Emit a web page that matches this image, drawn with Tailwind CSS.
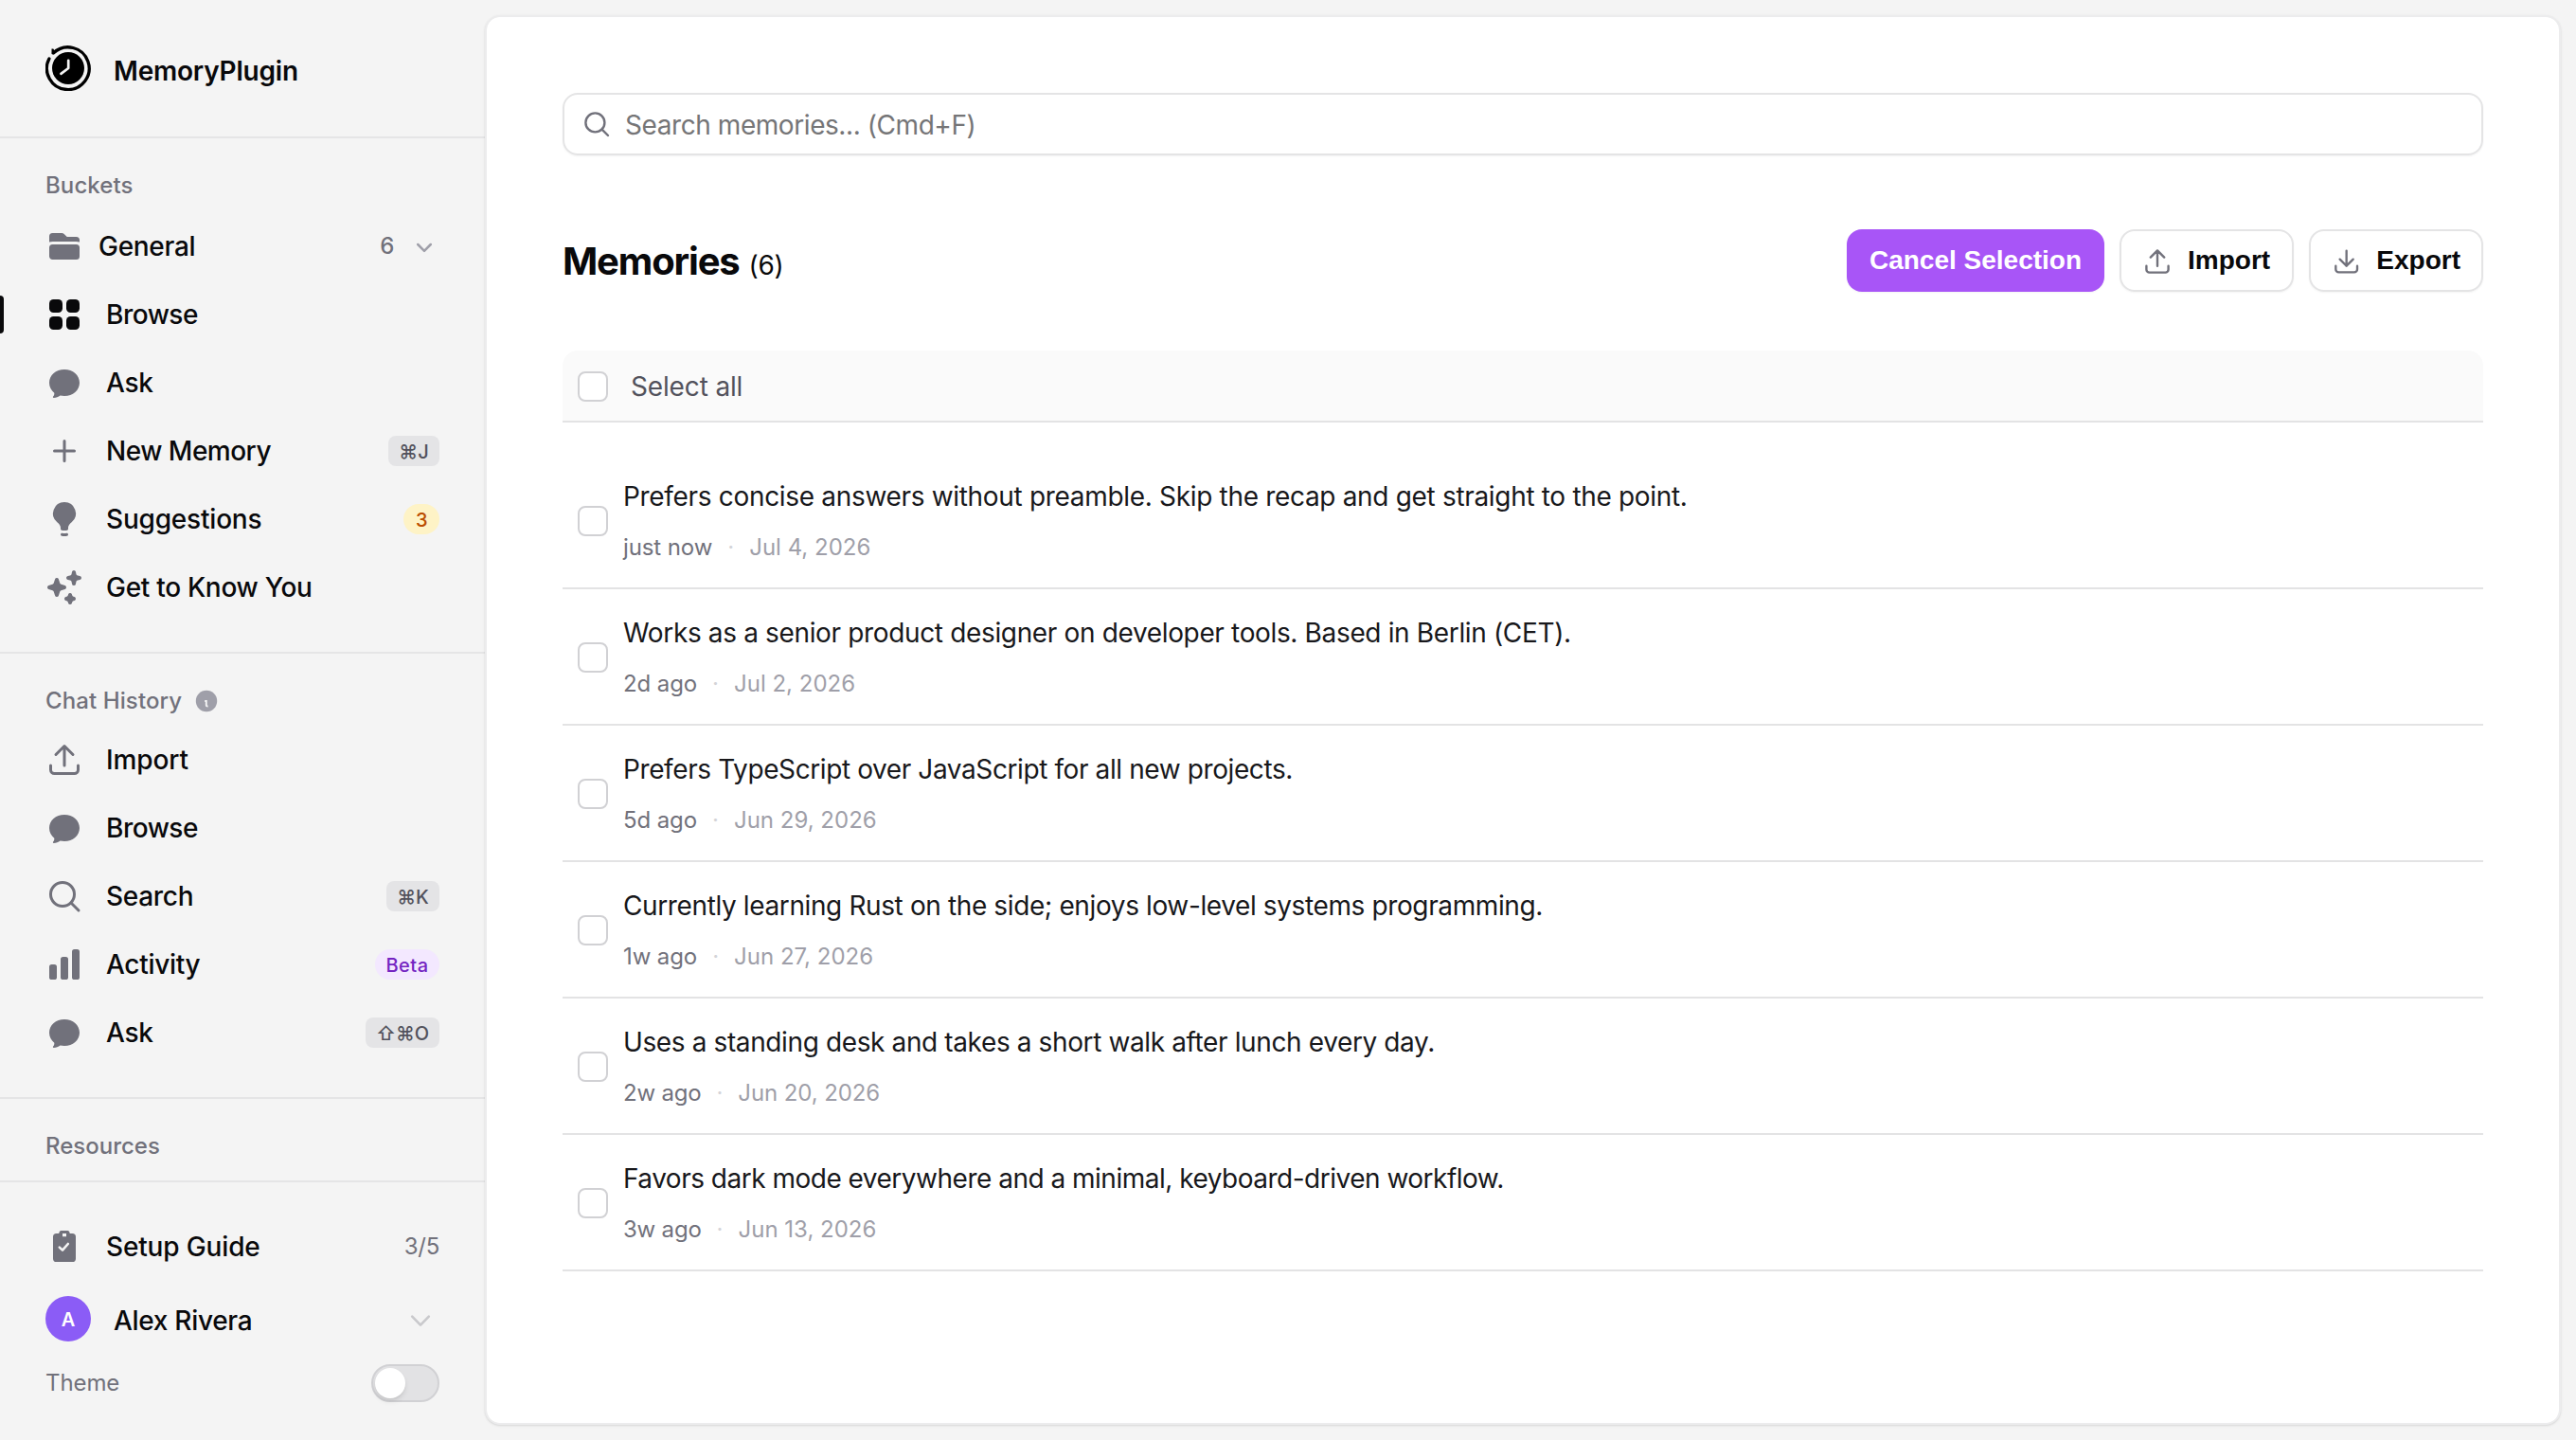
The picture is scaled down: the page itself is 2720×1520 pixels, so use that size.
<!DOCTYPE html>
<html lang="en">
<head>
    <meta charset="utf-8">
    <title>MemoryPlugin</title>
    <script src="https://cdn.jsdelivr.net/npm/@tailwindcss/browser@4"></script>
</head>
<body class="bg-[#f4f4f4] font-['Inter',sans-serif] text-zinc-950 w-[2720px] h-[1520px] overflow-hidden flex">
    <!-- Icons used more than once -->
    <svg class="hidden">
        <symbol id="icon-chat" viewBox="0 0 20 20">
            <path fill="currentColor" d="M10 3c4.5 0 8 3.05 8 7s-3.5 7-8 7c-.75 0-1.5-.09-2.2-.25-1 .8-2.2 1.2-3.45 1.2-.35 0-.5-.4-.3-.68.5-.65.7-1.2.6-1.95C3.05 14.1 2 12.2 2 10c0-3.95 3.5-7 8-7Z"/>
        </symbol>
        <symbol id="icon-upload" viewBox="0 0 20 20">
            <path fill="none" stroke="currentColor" stroke-width="1.5" stroke-linecap="round" stroke-linejoin="round" d="M2.75 13v2.25a2 2 0 0 0 2 2h10.5a2 2 0 0 0 2-2V13M10 13V3M5.5 7.25 10 2.75l4.5 4.5"/>
        </symbol>
        <symbol id="icon-search" viewBox="0 0 20 20">
            <path fill="none" stroke="currentColor" stroke-width="1.5" stroke-linecap="round" d="M15.25 9a6.25 6.25 0 1 1-12.5 0 6.25 6.25 0 0 1 12.5 0ZM13.5 13.5l4 4"/>
        </symbol>
    </svg>

    <!-- Sidebar -->
    <aside class="w-[512px] shrink-0 flex flex-col text-[28px] leading-[40px] font-medium tracking-[-0.3px]">
        <div class="h-[146px] border-b-2 border-[#e5e5e6] px-12 pt-12">
            <div class="flex gap-6">
                <svg class="size-12" viewBox="0 0 48 48" fill="none">
                    <circle cx="24" cy="24" r="17" fill="#000"/>
                    <path stroke="#000" stroke-width="3.3" stroke-linecap="round" d="M3.9 14A22.35 22.35 0 1 0 8.6 7.8"/>
                    <path fill="#000" d="M6.5 3.6h1.8l1.4 2.2 1.6 1.5-3.2 2.2-1.6-.4Z"/>
                    <path stroke="#f4f4f4" stroke-width="2.7" stroke-linecap="round" stroke-linejoin="round" d="M24.2 15.8V24l-7.8 5.8"/>
                </svg>
                <span class="font-semibold tracking-[-0.2px] pt-[7px]">MemoryPlugin</span>
            </div>
        </div>

        <div class="h-[544px] border-b-2 border-[#e5e5e6]">
            <h3 class="h-[78px] pt-[34px] px-12 text-2xl leading-8 text-zinc-500 tracking-[0.1px]">Buckets</h3>
            <div class="h-[72px] px-12 flex items-center gap-4">
                <svg class="size-10 text-zinc-500" viewBox="0 0 20 20" fill="currentColor"><path d="M3.75 3A1.75 1.75 0 0 0 2 4.75v2.95q.8-.2 1.75-.2h12.5q.95 0 1.75.2V6.75A1.75 1.75 0 0 0 16.25 5h-4.836a.25.25 0 0 1-.177-.073L9.823 3.513A1.75 1.75 0 0 0 8.586 3H3.75ZM3.75 9A1.75 1.75 0 0 0 2 10.75v4.5c0 .966.784 1.75 1.75 1.75h12.5A1.75 1.75 0 0 0 18 15.25v-4.5A1.75 1.75 0 0 0 16.25 9H3.75Z"/></svg>
                <span class="flex-1">General</span>
                <span class="text-2xl text-zinc-500">6</span>
                <svg class="w-8 h-8" viewBox="0 0 32 32" fill="none"><path class="stroke-zinc-400" stroke-width="2.5" stroke-linecap="round" stroke-linejoin="round" d="m9.2 14 6.8 6.8 6.8-6.8"/></svg>
            </div>
            <div class="h-[72px] px-12 flex items-center gap-6 relative">
                <span class="absolute left-0 top-4 w-1 h-10 bg-zinc-950 rounded-r-sm"></span>
                <svg class="size-10" viewBox="0 0 20 20" fill="currentColor"><rect x="2" y="2" width="7" height="7" rx="2.25"/><rect x="11" y="2" width="7" height="7" rx="2.25"/><rect x="2" y="11" width="7" height="7" rx="2.25"/><rect x="11" y="11" width="7" height="7" rx="2.25"/></svg>
                <span class="tracking-[-0.5px]">Browse</span>
            </div>
            <div class="h-[72px] px-12 flex items-center gap-6">
                <svg class="size-10 text-zinc-500"><use href="#icon-chat"/></svg>
                <span>Ask</span>
            </div>
            <div class="h-[72px] px-12 flex items-center gap-6">
                <svg class="size-10 text-zinc-500" viewBox="0 0 20 20" fill="none" stroke="currentColor" stroke-width="1.5" stroke-linecap="round"><path d="M10 4.75v10.5M4.75 10h10.5"/></svg>
                <span class="flex-1 tracking-[-0.5px]">New Memory</span>
                <kbd class="h-8 w-[54px] flex items-center justify-center rounded-lg bg-[#e4e4e6] pt-px text-xl text-zinc-600 font-[Inter] tracking-normal">⌘J</kbd>
            </div>
            <div class="h-[72px] px-12 flex items-center gap-6">
                <svg class="size-10 text-zinc-500" viewBox="0 0 20 20" fill="currentColor"><path d="M10 1a6 6 0 0 0-3.815 10.631C7.237 12.5 8 13.443 8 14.456v.644a.75.75 0 0 0 .572.729 6.016 6.016 0 0 0 2.856 0A.75.75 0 0 0 12 15.1v-.644c0-1.013.762-1.957 1.815-2.825A6 6 0 0 0 10 1ZM8.863 17.414a.75.75 0 0 0-.226 1.483 9.066 9.066 0 0 0 2.726 0 .75.75 0 0 0-.226-1.483 7.553 7.553 0 0 1-2.274 0Z"/></svg>
                <span class="flex-1 tracking-[-0.2px]">Suggestions</span>
                <span class="h-8 w-[38px] flex items-center justify-center rounded-full bg-amber-100 pt-[2px] text-xl text-amber-700">3</span>
            </div>
            <div class="h-[72px] px-12 flex items-center gap-6">
                <svg class="size-10 text-zinc-500" viewBox="0 0 20 20" fill="currentColor"><path d="M15.98 1.804a1 1 0 0 0-1.96 0l-.24 1.192a1 1 0 0 1-.784.785l-1.192.238a1 1 0 0 0 0 1.962l1.192.238a1 1 0 0 1 .785.785l.238 1.192a1 1 0 0 0 1.962 0l.238-1.192a1 1 0 0 1 .785-.785l1.192-.238a1 1 0 0 0 0-1.962l-1.192-.238a1 1 0 0 1-.785-.785l-.238-1.192ZM6.949 5.684a1 1 0 0 0-1.898 0l-.683 2.051a1 1 0 0 1-.633.633l-2.051.683a1 1 0 0 0 0 1.898l2.051.684a1 1 0 0 1 .633.632l.683 2.051a1 1 0 0 0 1.898 0l.683-2.051a1 1 0 0 1 .633-.633l2.051-.683a1 1 0 0 0 0-1.898l-2.051-.683a1 1 0 0 1-.633-.633L6.95 5.684ZM13.949 13.684a1 1 0 0 0-1.898 0l-.184.551a1 1 0 0 1-.632.633l-.551.183a1 1 0 0 0 0 1.898l.551.183a1 1 0 0 1 .633.633l.183.551a1 1 0 0 0 1.898 0l.184-.551a1 1 0 0 1 .632-.633l.551-.183a1 1 0 0 0 0-1.898l-.551-.184a1 1 0 0 1-.633-.632l-.183-.551Z"/></svg>
                <span>Get to Know You</span>
            </div>
        </div>

        <div class="h-[470px] border-b-2 border-[#e5e5e6]">
            <h3 class="h-[76px] pt-[34px] px-12 flex gap-[14px] text-2xl leading-8 text-zinc-500 tracking-[0.1px]">
                Chat History
                <svg class="size-6 mt-1" viewBox="0 0 24 24"><circle cx="12" cy="12" r="11.2" class="fill-zinc-400"/><path fill="none" stroke="#f4f4f4" stroke-width="1.9" d="M10.2 12h1.6v4.4q0 1.2 1.8 1"/></svg>
            </h3>
            <div class="h-[72px] px-12 flex items-center gap-6">
                <svg class="size-10 text-zinc-500"><use href="#icon-upload"/></svg>
                <span class="tracking-[-0.1px]">Import</span>
            </div>
            <div class="h-[72px] px-12 flex items-center gap-6">
                <svg class="size-10 text-zinc-500"><use href="#icon-chat"/></svg>
                <span class="tracking-[-0.5px]">Browse</span>
            </div>
            <div class="h-[72px] px-12 flex items-center gap-6">
                <svg class="size-10 text-zinc-500"><use href="#icon-search"/></svg>
                <span class="flex-1">Search</span>
                <kbd class="h-8 w-14 flex items-center justify-center rounded-lg bg-[#e4e4e6] pt-px text-xl text-zinc-600 font-[Inter] tracking-normal">⌘K</kbd>
            </div>
            <div class="h-[72px] px-12 flex items-center gap-6">
                <svg class="size-10 text-zinc-500" viewBox="0 0 20 20" fill="currentColor"><rect x="2" y="10" width="4" height="8" rx="1.3"/><rect x="8" y="6" width="4" height="12" rx="1.3"/><rect x="14" y="2" width="4" height="16" rx="1.3"/></svg>
                <span class="flex-1">Activity</span>
                <span class="h-8 w-[68px] flex items-center justify-center rounded-full bg-purple-100 pt-[2px] text-xl text-[#7424c2] tracking-[0.5px]">Beta</span>
            </div>
            <div class="h-[72px] px-12 flex items-center gap-6">
                <svg class="size-10 text-zinc-500"><use href="#icon-chat"/></svg>
                <span class="flex-1">Ask</span>
                <kbd class="h-8 w-[78px] flex items-center justify-center rounded-lg bg-[#e4e4e6] pt-px text-xl text-zinc-600 font-[Inter] tracking-normal">⇧⌘O</kbd>
            </div>
        </div>

        <h3 class="h-[88px] border-b-2 border-[#e5e5e6] pt-[34px] px-12 text-2xl leading-8 text-zinc-500 tracking-normal">Resources</h3>

        <div class="pt-8">
            <div class="h-[72px] px-12 flex items-center gap-6">
                <svg class="size-10 text-zinc-500" viewBox="0 0 20 20"><path fill="currentColor" fill-rule="evenodd" d="M8.2 1.5h3.6q.9 0 1.1 1.5h1.3A1.8 1.8 0 0 1 16 4.8v11.4a1.8 1.8 0 0 1-1.8 1.8H5.8A1.8 1.8 0 0 1 4 16.2V4.8A1.8 1.8 0 0 1 5.8 3h1.3q.2-1.5 1.1-1.5ZM9 3v1.6h2V3Z"/><path fill="none" stroke="#f4f4f4" stroke-width="1.3" stroke-linecap="round" stroke-linejoin="round" d="M7.4 10.3 9 11.8l2.9-3.3"/></svg>
                <span class="flex-1 tracking-[-0.15px]">Setup Guide</span>
                <span class="text-2xl font-normal text-zinc-500">3/5</span>
            </div>
            <div class="h-16 mt-2 px-12 flex items-center gap-6">
                <span class="size-12 rounded-full bg-[#8b5cf6] text-white text-xl font-semibold flex items-center justify-center pt-px">A</span>
                <span class="flex-1 pt-1">Alex Rivera</span>
                <svg class="size-10" viewBox="0 0 40 40" fill="none"><path stroke="#c9c9cc" stroke-width="2.6" stroke-linecap="round" stroke-linejoin="round" d="m11.2 17.6 8.8 9 8.8-9"/></svg>
            </div>
            <div class="h-10 mt-4 px-12 flex items-center justify-between">
                <span class="text-2xl font-normal text-zinc-500 tracking-[-0.1px]">Theme</span>
                <span class="w-[72px] h-10 rounded-full bg-[#e2e2e4] border-2 border-[#d1d1d4] p-[2px]"><span class="block size-8 rounded-full bg-white shadow-md"></span></span>
            </div>
        </div>
    </aside>

    <!-- Main panel -->
    <main class="w-[2192px] h-[1488px] mt-4 bg-white bg-clip-padding border-2 border-[#ececed] rounded-2xl shadow-sm px-20 pt-20 text-[28px] leading-[40px] tracking-[-0.3px]">
        <div class="h-[66px] border-2 border-[#e4e4e5] rounded-2xl shadow-xs flex items-center gap-[14px] px-[18px]">
            <svg class="size-8 text-zinc-500"><use href="#icon-search"/></svg>
            <span class="pt-[2px] text-[#757577] tracking-[-0.43px]">Search memories... (Cmd+F)</span>
        </div>

        <div class="h-[66px] mt-[78px] flex items-center justify-between">
            <h1 class="flex items-baseline gap-[10px] pt-[6px]">
                <span class="text-[40px] font-bold tracking-[-1.15px]">Memories</span>
                <span>(6)</span>
            </h1>
            <div class="flex gap-4 font-['Liberation_Sans',Arial,sans-serif] font-bold tracking-normal">
                <button class="w-[272px] h-[66px] rounded-2xl bg-[#a855f7] text-white shadow-xs">Cancel Selection</button>
                <button class="w-[184px] h-[66px] rounded-2xl border-2 border-[#e4e4e5] px-[22px] flex items-center gap-4 shadow-xs">
                    <svg class="size-8 text-zinc-500 mt-[2px]"><use href="#icon-upload"/></svg>
                    <span>Import</span>
                </button>
                <button class="w-[184px] h-[66px] rounded-2xl border-2 border-[#e4e4e5] px-[22px] flex items-center gap-4 shadow-xs">
                    <svg class="size-8 text-zinc-500 mt-[2px]" viewBox="0 0 20 20"><path fill="none" stroke="currentColor" stroke-width="1.5" stroke-linecap="round" stroke-linejoin="round" d="M2.75 13v2.25a2 2 0 0 0 2 2h10.5a2 2 0 0 0 2-2V13M10 2.75V13M5.5 8.5 10 13l4.5-4.5"/></svg>
                    <span>Export</span>
                </button>
            </div>
        </div>

        <div class="mt-[62px] h-[76px] bg-[#fafafa] border-b-2 border-[#e3e3e4] rounded-t-2xl px-4 pt-[2px] flex items-center gap-6 text-zinc-600">
            <span class="size-8 rounded-lg border-2 border-[#d1d1d4] bg-white"></span>
            <span class="tracking-[-0.15px]">Select all</span>
        </div>

        <ul class="mt-8">
            <li class="h-36 border-b-2 border-[#e3e3e4] px-4 flex gap-4">
                <span class="size-8 mt-14 rounded-lg border-2 border-[#d1d1d4] bg-white"></span>
                <div class="pt-[26px]">
                    <p class="text-zinc-900 tracking-[-0.32px]">Prefers concise answers without preamble. Skip the recap and get straight to the point.</p>
                    <p class="mt-[18px] flex gap-4 text-2xl leading-8 tracking-normal text-zinc-400"><span class="text-zinc-500 tracking-[-0.1px]">just now</span><span class="text-zinc-300">·</span><span>Jul 4, 2026</span></p>
                </div>
            </li>
            <li class="h-36 border-b-2 border-[#e3e3e4] px-4 flex gap-4">
                <span class="size-8 mt-14 rounded-lg border-2 border-[#d1d1d4] bg-white"></span>
                <div class="pt-[26px]">
                    <p class="text-zinc-900 tracking-[-0.35px]">Works as a senior product designer on developer tools. Based in Berlin (CET).</p>
                    <p class="mt-[18px] flex gap-4 text-2xl leading-8 tracking-normal text-zinc-400"><span class="text-zinc-500 tracking-[-0.1px]">2d ago</span><span class="text-zinc-300">·</span><span>Jul 2, 2026</span></p>
                </div>
            </li>
            <li class="h-36 border-b-2 border-[#e3e3e4] px-4 flex gap-4">
                <span class="size-8 mt-14 rounded-lg border-2 border-[#d1d1d4] bg-white"></span>
                <div class="pt-[26px]">
                    <p class="text-zinc-900 tracking-[-0.4px]">Prefers TypeScript over JavaScript for all new projects.</p>
                    <p class="mt-[18px] flex gap-4 text-2xl leading-8 tracking-normal text-zinc-400"><span class="text-zinc-500 tracking-[-0.1px]">5d ago</span><span class="text-zinc-300">·</span><span>Jun 29, 2026</span></p>
                </div>
            </li>
            <li class="h-36 border-b-2 border-[#e3e3e4] px-4 flex gap-4">
                <span class="size-8 mt-14 rounded-lg border-2 border-[#d1d1d4] bg-white"></span>
                <div class="pt-[26px]">
                    <p class="text-zinc-900 tracking-[-0.38px]">Currently learning Rust on the side; enjoys low-level systems programming.</p>
                    <p class="mt-[18px] flex gap-4 text-2xl leading-8 tracking-normal text-zinc-400"><span class="text-zinc-500 tracking-[-0.1px]">1w ago</span><span class="text-zinc-300">·</span><span>Jun 27, 2026</span></p>
                </div>
            </li>
            <li class="h-36 border-b-2 border-[#e3e3e4] px-4 flex gap-4">
                <span class="size-8 mt-14 rounded-lg border-2 border-[#d1d1d4] bg-white"></span>
                <div class="pt-[26px]">
                    <p class="text-zinc-900 tracking-[-0.38px]">Uses a standing desk and takes a short walk after lunch every day.</p>
                    <p class="mt-[18px] flex gap-4 text-2xl leading-8 tracking-normal text-zinc-400"><span class="text-zinc-500 tracking-[-0.2px]">2w ago</span><span class="text-zinc-300">·</span><span class="tracking-[-0.1px]">Jun 20, 2026</span></p>
                </div>
            </li>
            <li class="h-36 border-b-2 border-[#e3e3e4] px-4 flex gap-4">
                <span class="size-8 mt-14 rounded-lg border-2 border-[#d1d1d4] bg-white"></span>
                <div class="pt-[26px]">
                    <p class="text-zinc-900 tracking-[-0.5px]">Favors dark mode everywhere and a minimal, keyboard-driven workflow.</p>
                    <p class="mt-[18px] flex gap-4 text-2xl leading-8 tracking-normal text-zinc-400"><span class="text-zinc-500 tracking-[-0.2px]">3w ago</span><span class="text-zinc-300">·</span><span>Jun 13, 2026</span></p>
                </div>
            </li>
        </ul>
    </main>
</body>
</html>
